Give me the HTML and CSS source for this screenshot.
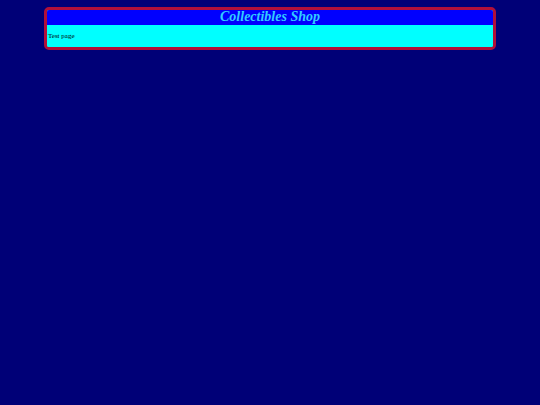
FILE: index.html
```html
<!DOCTYPE html>
<html>
<head>
<meta charset="utf-8">
<title>Collectibles Shop</title>
<link rel="stylesheet" href="styles.css">
</head>
<body>
<div class="shop">
  <div class="shop-header">Collectibles Shop</div>
  <div class="shop-body">Test page</div>
</div>
</body>
</html>
```
FILE: styles.css
```css
html, body {
  margin: 0;
  padding: 0;
}
body {
  background: #000077;
  font-family: "Liberation Serif", "Times New Roman", serif;
  padding-top: 7px;
}
.shop {
  width: 446px;
  margin: 0 auto;
  border: 3px solid #b0103a;
  border-radius: 5px;
  overflow: hidden;
  background: #00ffff;
}
.shop-header {
  background: #0000ff;
  color: #33ccff;
  font-weight: bold;
  font-style: italic;
  font-size: 14px;
  text-align: center;
  height: 15px;
  line-height: 14px;
}
.shop-body {
  background: #00ffff;
  color: #000;
  font-size: 7px;
  height: 22px;
  line-height: 22px;
  padding-left: 1px;
}
```
